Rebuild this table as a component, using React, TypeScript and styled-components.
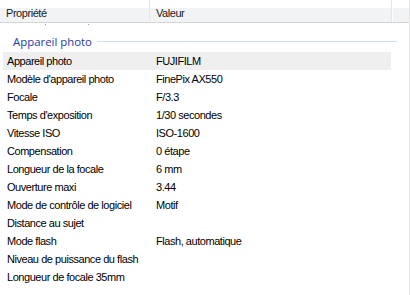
import React from 'react';
import styled, {createGlobalStyle} from 'styled-components';

const GlobalStyle = createGlobalStyle`
  html, body {
    margin: 0;
    padding: 0;
    background: #ffffff;
  }
  body {
    font-family: "Liberation Sans", Arial, sans-serif;
    font-size: 11px;
    letter-spacing: -0.45px;
    color: #000000;
  }
`

type Prop = {name: string; value?: string};

const cameraProps: Prop[] = [
    {name: 'Appareil photo', value: 'FUJIFILM'},
    {name: "Modèle d'appareil photo", value: 'FinePix AX550'},
    {name: 'Focale', value: 'F/3.3'},
    {name: "Temps d'exposition", value: '1/30 secondes'},
    {name: 'Vitesse ISO', value: 'ISO-1600'},
    {name: 'Compensation', value: '0 étape'},
    {name: 'Longueur de la focale', value: '6 mm'},
    {name: 'Ouverture maxi', value: '3.44'},
    {name: 'Mode de contrôle de logiciel', value: 'Motif'},
    {name: 'Distance au sujet'},
    {name: 'Mode flash', value: 'Flash, automatique'},
    {name: 'Niveau de puissance du flash'},
    {name: 'Longueur de focale 35mm'},
];

export default function App() {
    return (
        <>
            <GlobalStyle/>
            <Panel>
                <Header>
                    <HeaderCell $width={150}>Propriété</HeaderCell>
                    <HeaderCell $width={242}>Valeur</HeaderCell>
                    <HeaderFiller/>
                </Header>
                <List>
                    {/* tail of the previous group, scrolled out of view */}
                    <ScrolledTail/>
                    <Group>
                        <GroupTitle>Appareil photo</GroupTitle>
                        <GroupLine/>
                    </Group>
                    {cameraProps.map((p, i) => (
                        <Row key={p.name} $active={i === 0}>
                            <NameCell>{p.name}</NameCell>
                            <ValueCell>{p.value ?? ''}</ValueCell>
                        </Row>
                    ))}
                </List>
            </Panel>
        </>
    );
}

const Panel = styled.div`
  width: 410px;
  height: 295px;
  box-sizing: border-box;
  border-right: 1px solid #e3e3e3;
  overflow: hidden;
  display: flex;
  flex-direction: column;
`

const Header = styled.div`
  height: 23px;
  flex: none;
  display: flex;
  box-sizing: border-box;
  border-bottom: 1px solid #d5d5d5;
  background: linear-gradient(to bottom, #ffffff 0, #ffffff 8px, #f2f3f5 8px, #f2f3f5 100%);
`

const HeaderCell = styled.div<{ $width: number }>`
  width: ${p => p.$width}px;
  flex: none;
  box-sizing: border-box;
  padding: 7px 0 0 6px;
  border-right: 1px solid #e4e5e7;
  line-height: 13px;
  color: #1a1a1a;
`

const HeaderFiller = styled.div`
  flex: 1;
  border-left: 1px solid #ffffff;
`

const List = styled.div`
  flex: 1;
  overflow: hidden;
`

const ScrolledTail = styled.div`
  height: 3px;
  margin-left: 3px;
  width: 388px;
  background: linear-gradient(to right, transparent 42px, #9a9a9a 42px, #9a9a9a 43px, transparent 43px,
  transparent 85px, #9a9a9a 85px, #9a9a9a 86px, transparent 86px);
  background-size: 100% 1px;
  background-repeat: no-repeat;
  background-position: 0 1px;
`

const Row = styled.div<{ $active?: boolean }>`
  height: 18px;
  width: 388px;
  margin-left: 3px;
  display: flex;
  align-items: center;
  background: ${p => (p.$active ? '#efefef' : 'transparent')};
`

const NameCell = styled.div`
  width: 150px;
  flex: none;
  padding-left: 4px;
  box-sizing: border-box;
  white-space: nowrap;
`

const ValueCell = styled.div`
  flex: 1;
  padding-left: 3px;
  white-space: nowrap;
`

const Group = styled.div`
  height: 26px;
  display: flex;
  align-items: center;
  padding: 5px 12px 0 13px;
  box-sizing: border-box;
  gap: 5px;
`

const GroupTitle = styled.div`
  font-family: "Open Sans", "Noto Sans", sans-serif;
  font-size: 11.4px;
  letter-spacing: 0;
  color: #1e3aa8;
  white-space: nowrap;
`

const GroupLine = styled.div`
  flex: 1;
  height: 1px;
  margin-top: -1px;
  background: #d2dde6;
`
